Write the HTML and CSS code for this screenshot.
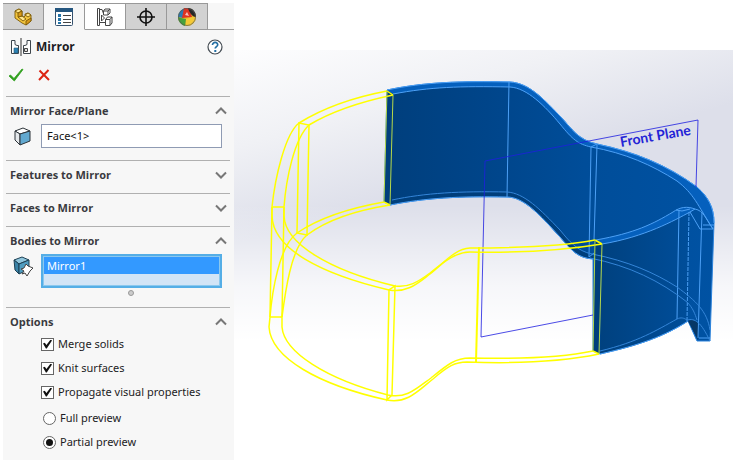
FILE: index.html
```html
<!DOCTYPE html>
<html lang="en">
<head>
<meta charset="utf-8">
<title>Mirror</title>
<link rel="stylesheet" href="styles.css">
</head>
<body>
<main class="app">
  <aside class="panel">
    <nav class="tabs" aria-label="Manager tabs">
      <button class="tab" type="button" aria-label="Feature tree">
        <svg width="20" height="20" viewBox="0 0 20 20"><g stroke="#7c5a08" stroke-width=".9" stroke-linejoin="round"><path fill="#f3c53c" d="M2 4l4-2 3 2v5l2 1 1-1V7l3-1 3 2v6l-5 4-4-2-7-5z"/><path fill="#ffe58a" d="M2 4l4-2 3 2-4 2zM12 8l3-2 3 2-3 2zM5 10l4-1 4 3-3 2z"/><path fill="#d99a18" d="M13 14l5-3v3l-5 4zM5 6l4-2v5l-4 1z"/></g></svg>
      </button>
      <button class="tab tab-active" type="button" aria-label="Properties">
        <svg width="20" height="20" viewBox="0 0 20 20"><rect x="1.500" y="1.500" width="17" height="17" rx="1" fill="#fff" stroke="#35516e"/><path fill="#25567f" d="M1 1h18v4H1z"/><path fill="#2573a7" d="M4 7h3v3H4zM4 11h3v3H4zM4 15h3v2H4z"/><path stroke="#444" d="M9 8.500h8M9 12.500h8M9 15.500h8"/></svg>
      </button>
      <button class="tab tab-plain" type="button" aria-label="Configurations">
        <svg width="18" height="20" viewBox="0 0 18 20"><g fill="#fff" stroke="#444" stroke-linejoin="round"><path d="M1.500 1.500h2v17h-2zM3.500 2.500H6L8 8M3.500 15.500H9"/><path d="M7.500 4l1.500-2h5v4l-2 2H7.500zM7.500 4H12v4M12 4l2-2M9.500 12.500l2-2.500H16v6l-2 2.500H9.500zM9.500 12.500H14v6M14 12.500l2-2.500"/><path d="M5.500 8l3 3-3 3z"/></g></svg>
      </button>
      <button class="tab" type="button" aria-label="Dimensions">
        <svg width="20" height="20" viewBox="0 0 20 20"><circle cx="10" cy="10" r="6" fill="none" stroke="#111" stroke-width="1.600"/><path stroke="#111" stroke-width="1.600" d="M10 1v18M1 10h18"/></svg>
      </button>
      <button class="tab" type="button" aria-label="Appearances">
        <svg width="20" height="20" viewBox="0 0 20 20"><circle cx="10" cy="10" r="9" fill="#e8b92b"/><path fill="#2b7bb5" d="M9 1a9 9 0 0 0-8 9l5 1z"/><path fill="#47a13d" d="M1 10a9 9 0 0 0 7 9l1-7-5-1z"/><path fill="#df3322" d="M7 1h5l3 9-10 1z"/><path fill="#f4c936" d="M9 12l7-2h3a9 9 0 0 1-10 9z"/><path fill="#272727" d="M11 1c5 0 8 4 8 9-4 0-7-5-8-9z"/><path fill="#fff" opacity=".7" d="M10 5l2 4-4-1z"/><circle cx="10" cy="10" r="8.500" fill="none" stroke="#555" stroke-width=".7"/></svg>
      </button>
    </nav>

    <header class="title-row">
      <svg width="20" height="18" viewBox="0 0 20 18"><path fill="#fff" stroke="#3d454c" d="M.5 2.500H4v4l2 1h1.500v8h-7zM19.500 2.500H16v4l-2 1h-1.500v8h7z"/><path fill="#2c82b4" stroke="#265a7b" stroke-width=".6" d="M3 10h4v5H3z"/><path fill="#ddd" stroke="#444" d="M13.500 10.500h3v3h-3z"/><path stroke="#333" d="M10 0v18"/></svg>
      <h1 class="title">Mirror</h1>
      <button class="icon-button" type="button" aria-label="Help">
        <svg width="16" height="16" viewBox="0 0 16 16"><circle cx="8" cy="8" r="7" fill="#fff" stroke="#444b52" stroke-width="1.200"/><path d="M5.500 6c0-3.500 5.500-3.300 5.200 0-.2 1.600-2.500 1.800-2.500 3.600" fill="none" stroke="#246fa3" stroke-width="1.700"/><path fill="#246fa3" d="M7.300 11h2v2h-2z"/></svg>
      </button>
    </header>
    <div class="actions">
      <button class="icon-button" type="button" aria-label="OK">
        <svg width="16" height="14" viewBox="0 0 16 14"><path d="M1 8l1.500-1L6 10.500 14 1l1 .5L6.300 13z" fill="#2e9f1c" stroke="#2e9f1c" stroke-width=".8"/></svg>
      </button>
      <button class="icon-button" type="button" aria-label="Cancel">
        <svg width="12" height="12" viewBox="0 0 12 12"><path d="M1.500 1.500l9.500 9.500M10.500 1L1 11" stroke="#dc2412" stroke-width="2"/></svg>
      </button>
    </div>

    <section class="group">
      <button class="group-head" type="button" aria-expanded="true"><span>Mirror Face/Plane</span><svg class="chevron" viewBox="0 0 12 8"><path d="M1 6.500l5-5 5 5"/></svg></button>
      <div class="field">
        <svg width="20" height="24" viewBox="0 0 20 24"><g stroke="#2c3338" stroke-linejoin="round"><path fill="#fff" d="M2 7l8-3 7 3-10 3z"/><path fill="#e5e9ec" d="M2 7l5 3v11l-5-5z"/><path fill="#62a9d0" d="M7 10l10-3v10L7 21z"/></g></svg>
        <input class="text-box" type="text" value="Face&lt;1&gt;" aria-label="Mirror Face/Plane">
      </div>
    </section>

    <section class="group group-closed">
      <button class="group-head" type="button" aria-expanded="false"><span>Features to Mirror</span><svg class="chevron" viewBox="0 0 12 8"><path d="M1 1.500l5 5 5-5"/></svg></button>
    </section>

    <section class="group group-closed">
      <button class="group-head" type="button" aria-expanded="false"><span>Faces to Mirror</span><svg class="chevron" viewBox="0 0 12 8"><path d="M1 1.500l5 5 5-5"/></svg></button>
    </section>

    <section class="group group-bodies">
      <button class="group-head" type="button" aria-expanded="true"><span>Bodies to Mirror</span><svg class="chevron" viewBox="0 0 12 8"><path d="M1 6.500l5-5 5 5"/></svg></button>
      <div class="field">
        <svg width="20" height="24" viewBox="0 0 20 24"><g stroke="#1d4054" stroke-linejoin="round"><path fill="#8fc5dc" d="M1 6l8-3 7 3-10 4z"/><path fill="#3a83a7" d="M1 6l5 4v10l-4-4z"/><path fill="#4f9cc0" d="M6 10l10-4v9L6 20z"/><path fill="#fff" stroke="#444" d="M8 15l3-1 2-4 2 2 5 2-3 3-3 5-2-3-3 1 2-3z"/></g></svg>
        <ul class="list-box" role="listbox" aria-label="Bodies to Mirror">
          <li class="list-item" role="option" aria-selected="true">Mirror1</li>
        </ul>
      </div>
      <div class="grip-row"><span class="grip"></span></div>
    </section>

    <section class="group">
      <button class="group-head" type="button" aria-expanded="true"><span>Options</span><svg class="chevron" viewBox="0 0 12 8"><path d="M1 6.500l5-5 5 5"/></svg></button>
      <div class="options">
        <label class="option"><input class="check" type="checkbox" checked>Merge solids</label>
        <label class="option"><input class="check" type="checkbox" checked>Knit surfaces</label>
        <label class="option"><input class="check" type="checkbox" checked>Propagate visual properties</label>
      </div>
      <div class="options options-radio">
        <label class="option"><input class="radio" type="radio" name="preview">Full preview</label>
        <label class="option"><input class="radio" type="radio" name="preview" checked>Partial preview</label>
      </div>
    </section>
  </aside>

  <div class="viewport">
    <svg class="scene" viewBox="234 50 499 410" role="img" aria-label="Model preview">
      <defs>
        <linearGradient id="sky" gradientUnits="userSpaceOnUse" x1="240" y1="50" x2="290" y2="228">
          <stop offset="0" stop-color="#fdfdfe"/><stop offset=".5" stop-color="#f0f1f5"/><stop offset="1" stop-color="#dddfea"/>
        </linearGradient>
        <linearGradient id="ground" x1="0" y1="0" x2="0" y2="1">
          <stop offset="0" stop-color="#fff" stop-opacity="0"/><stop offset=".6" stop-color="#fff" stop-opacity=".75"/><stop offset="1" stop-color="#fff"/>
        </linearGradient>
        <linearGradient id="wall" gradientUnits="userSpaceOnUse" x1="390" y1="0" x2="714" y2="0">
          <stop offset="0" stop-color="#003f7d"/><stop offset=".3" stop-color="#00458a"/><stop offset=".6" stop-color="#004d99"/><stop offset="1" stop-color="#0052a3"/>
        </linearGradient>
        <linearGradient id="front" gradientUnits="userSpaceOnUse" x1="600" y1="0" x2="700" y2="0">
          <stop offset="0" stop-color="#00417f"/><stop offset="1" stop-color="#004f9d"/>
        </linearGradient>
      </defs>
      <path fill="url(#sky)" d="M234 50h499v290H234z"/>
      <path fill="url(#ground)" d="M234 205h499v136H234z"/>

      <!-- solid half -->
      <path fill="url(#wall)" stroke="#2c83dc" d="M387 90C425 82 460 81 510 82C530 83 545 101 560 116C572 129 578 140 597 144C635 152 667 165 697 187C708 197 714 207 714 223L710 341H697L688 321C665 336 640 345 600 354L593 351V259C578 258 572 251 560 237C540 215 524 197 507 197C460 196 425 198 390 205L384 202z"/>
      <path fill="url(#front)" d="M602 244C640 237 659 227 680 216L690 212L688 321C665 336 640 345 600 354z"/>
      <path fill="#0560bd" d="M387 90C425 82 460 81 510 82C530 83 545 101 560 116C572 129 578 140 597 144C635 152 667 165 697 187C708 197 714 207 714 223L713 229C697 204 694 194 677 181C652 165 625 153 591 147C578 144 573 140 560 124C545 106 527 88 510 87C460 86 430 87 393 94z"/>
      <path fill="#0560bd" d="M596 240C635 233 653 224 673 212C680 207 687 206 695 209L690 212C675 220 645 237 602 244z"/>
      <path fill="#063766" d="M688 321C693 319 697 320 699 326L698 340z"/>
      <path fill="#003f7c" d="M387 91L384 202L391 205L393 95zM595 240L593 351L599 354L602 244z"/>
      <path fill="#003f7c" d="M392 200C425 193 460 191 507 192C524 193 540 209 560 230C570 242 578 250 593 256V259C578 258 572 251 560 237C540 215 524 197 507 197C460 196 425 198 390 205z"/>

      <g class="edge">
        <path d="M387 90C425 82 460 81 510 82C530 83 545 101 560 116C572 129 578 140 597 144C635 152 667 165 697 187C708 197 714 207 714 223"/>
        <path d="M393 94C430 87 460 86 510 87C527 88 545 106 560 124C573 140 578 144 591 147C625 153 652 165 677 181C694 194 697 204 713 229"/>
        <path d="M509 82L507 197M591 147L589 257M597 145L594 240M591 147L597 144M589 257L594 253"/>
        <path d="M390 205C425 198 460 196 507 197C524 197 540 215 560 237C572 251 578 258 593 259"/>
        <path d="M596 240C635 233 653 224 673 212C680 207 687 206 695 209C704 211 705 218 713 229"/>
        <path d="M602 244C645 237 675 220 690 212L695 209"/>
        <path d="M690 212L700 229H713M703 225H714M679 210L677 319M702 212L698 338M699 338H710M676 210L682 211L690 209"/>
        <path stroke-dasharray="4 1" d="M689 212L687 321"/>
        <path d="M600 354C640 345 665 336 688 321"/>
      </g>
      <g class="edge edge-hidden">
        <path d="M392 200C425 193 460 191 507 192C524 193 540 209 560 230C569 241 577 251 592 254C628 261 655 273 677 287C696 301 707 311 710 330"/>
        <path d="M590 258C630 266 660 281 687 302C693 308 695 314 697 320"/>
        <path d="M600 351C638 342 657 330 677 319C681 317 684 318 687 320C695 318 701 322 710 341"/>
      </g>

      <!-- reference plane -->
      <path class="plane" d="M593 315L481 337L485 161L698 120L696 187"/>
      <text class="plane-label" transform="translate(621 147) rotate(-10)">Front Plane</text>

      <!-- mirrored preview -->
      <g class="preview">
        <path d="M387 91C350 98 320 110 299 123C285 134 275 178 272 207L270 317"/>
        <path d="M393 95C355 103 329 113 309 125C294 139 286 180 284 207L282 317"/>
        <path d="M299 123L309 125L307 235L297 233zM272 207H284M270 317H282"/>
        <path d="M384 202C350 208 319 218 297 233C279 246 272 293 270 317"/>
        <path d="M390 205C358 210 327 220 307 235C291 248 285 294 282 317"/>
        <path d="M272 207V216C273 249 321 274 389 290C408 293 418 283 430 274C446 261 455 249 470 248C510 248 558 247 595 240"/>
        <path d="M284 207V216C285 243 328 270 395 286C408 288 418 282 430 273C446 260 457 252 470 252C520 253 560 251 602 244"/>
        <path d="M270 317L269 327C271 358 319 385 387 400C407 404 418 391 433 379C448 366 455 362 467 362C520 364 560 362 599 354"/>
        <path d="M282 317V327C284 352 326 379 388 395C406 399 416 389 431 378C447 365 455 358 470 358C510 359 555 359 593 351"/>
        <path d="M389 290L387 400L392 395L395 286zM595 240L602 244"/>
        <path d="M387 91L393 95M384 202L390 205M593 351L599 354"/>
        <path class="seam" d="M479 247L476 362"/>
      </g>
      <path class="preview-end" d="M387 91L384 202M393 95L390 205M595 240L593 351M602 244L599 354"/>
    </svg>
  </div>
</main>
</body>
</html>
```
FILE: styles.css
```css
* {
  box-sizing: border-box;
}

body {
  margin: 0;
  background: #fff;
  color: #1c1c24;
  font: 11px/18px "Noto Sans", "Open Sans", sans-serif;
}

button {
  padding: 0;
  border: 0;
  background: none;
  color: inherit;
  font: inherit;
}

svg {
  display: block;
  flex: none;
}

.app {
  display: flex;
  align-items: flex-start;
  min-height: 100vh;
  padding: 3px 0 0 3px;
}

.panel {
  flex: 0 0 231px;
  min-height: calc(100vh - 3px);
  background: #f7f7f7;
}

.tabs {
  display: flex;
  height: 27px;
  border-bottom: 1px solid #a0a0a0;
}

.tab {
  display: flex;
  align-items: center;
  justify-content: center;
  width: 41px;
  height: 27px;
  border: 1px solid #999;
  border-left: 0;
  background: #d2d2d2;
}

.tab-active {
  border-top-color: #aaa;
  border-bottom-color: #f7f7f7;
  background: #f7f7f7;
}

.tab-plain {
  background: #fff;
}

.title-row {
  display: flex;
  align-items: center;
  gap: 5px;
  height: 33px;
  padding: 0 11px 0 8px;
}

.title {
  flex: 1;
  margin: 0;
  font: 700 12px/18px "Open Sans", sans-serif;
}

.actions {
  display: flex;
  align-items: center;
  gap: 14px;
  height: 33px;
  padding: 0 6px 10px 5px;
}

.group {
  margin: 0 4px 0 3px;
  padding-bottom: 12px;
  border-top: 1px solid #b0b0b0;
}

.group-closed {
  padding-bottom: 5px;
}

.group-bodies {
  padding-bottom: 9px;
}

.group-head {
  display: flex;
  align-items: center;
  justify-content: space-between;
  width: 100%;
  height: 27px;
  padding: 0 3px 0 4px;
  color: #3a3a40;
  font: 700 11px/18px "Open Sans", sans-serif;
}

.chevron {
  width: 12px;
  height: 8px;
  fill: none;
  stroke: #777;
  stroke-width: 2;
}

.field {
  display: flex;
  align-items: flex-start;
  gap: 8px;
  padding: 0 8px 0 7px;
}

.text-box {
  flex: 1;
  min-width: 0;
  height: 24px;
  padding: 0 5px 2px;
  border: 1px solid #8f9bb3;
  background: #fff;
  color: #111;
  font: inherit;
}

.list-box {
  flex: 1;
  height: 34px;
  margin: 0;
  padding: 0;
  border: 2px solid #55aee6;
  outline: 1px solid #8cc8ee;
  outline-offset: -3px;
  background: #d2e4f6;
  list-style: none;
}

.list-item {
  margin: 1px;
  padding: 0 3px;
  background: #3399ff;
  color: #fff;
  line-height: 17px;
}

.grip-row {
  display: flex;
  justify-content: center;
  height: 10px;
  padding: 2px 0 0 26px;
}

.grip {
  width: 6px;
  height: 6px;
  border: 1px solid #999;
  border-radius: 50%;
  background: #ccc;
}

.options {
  display: flex;
  flex-direction: column;
  gap: 6px;
  padding-left: 35px;
}

.options-radio {
  margin-top: 8px;
  padding-left: 37px;
}

.option {
  display: flex;
  align-items: center;
  gap: 4px;
  height: 18px;
}

.check,
.radio {
  display: grid;
  place-items: center;
  appearance: none;
  width: 13px;
  height: 13px;
  margin: 0;
  border: 1px solid #666;
  background: #fff;
}

.radio {
  border-radius: 50%;
}

.check:checked::before {
  content: "";
  width: 9px;
  height: 9px;
  background: #111;
  clip-path: polygon(0 45%, 20% 35%, 38% 62%, 85% 0, 100% 12%, 42% 100%, 32% 100%);
}

.radio:checked::before {
  content: "";
  width: 7px;
  height: 7px;
  border-radius: 50%;
  background: #111;
}

.viewport {
  flex: 1;
  min-width: 0;
  padding-top: 47px;
}

.scene {
  width: 100%;
  height: auto;
}

.edge {
  fill: none;
  stroke: #4da0f5;
}

.edge-hidden {
  stroke: #3485d8;
}

.plane {
  fill: none;
  stroke: #1e1ee0;
  stroke-opacity: 0.8;
}

.plane-label {
  fill: #2424d6;
  font: 700 14px Lato, "Open Sans", sans-serif;
}

.preview {
  fill: none;
  stroke: #ff0;
  stroke-width: 1.5px;
}

.seam {
  stroke-width: 2px;
}

.preview-end {
  fill: none;
  stroke: #b5d84a;
}
```
